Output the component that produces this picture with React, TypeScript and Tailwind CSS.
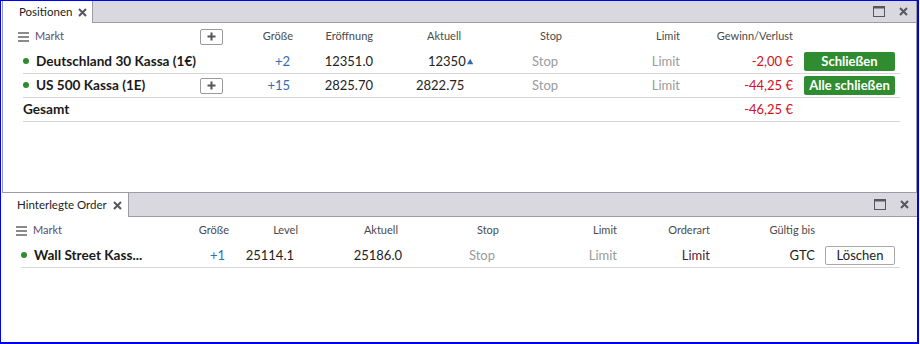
import React from "react";

function CloseIcon() {
    return (
        <svg width="9" height="9" viewBox="0 0 9 9" className="shrink-0">
            <path d="M1 1L8 8M8 1L1 8" stroke="#56565e" strokeWidth="2" />
        </svg>
    );
}

function MaxIcon() {
    return (
        <svg width="12" height="11" viewBox="0 0 12 11" className="shrink-0">
            <rect x="0.5" y="0.5" width="11" height="10" fill="none" stroke="#56565e" />
            <rect x="0.5" y="0.5" width="11" height="2" fill="#56565e" />
        </svg>
    );
}

function Burger() {
    return (
        <div className="flex flex-col gap-[2px] w-[11px] shrink-0">
            <div className="h-[2px] bg-[#8a8a8a]" />
            <div className="h-[2px] bg-[#8a8a8a]" />
            <div className="h-[2px] bg-[#8a8a8a]" />
        </div>
    );
}

function Dot() {
    return <div className="w-[6px] h-[6px] rounded-full bg-[#2e8b2e] shrink-0" />;
}

function PlusBtn() {
    return (
        <button className="w-[23px] h-[16px] border border-[#9a9a9a] rounded-[2px] bg-white flex items-center justify-center">
            <svg width="9" height="9" viewBox="0 0 9 9">
                <path d="M4.5 0.5V8.5M0.5 4.5H8.5" stroke="#555" strokeWidth="2" />
            </svg>
        </button>
    );
}

function TabBar({ label, tabW, padL, h }: { label: string; tabW: string; padL: string; h: string }) {
    return (
        <div className={`flex ${h} shrink-0`}>
            <div className={`${tabW} ${padL} bg-white border-r border-[#9c9ca6] flex items-center gap-[6px] text-[11.5px] text-[#222]`}>
                <span>{label}</span>
                <CloseIcon />
            </div>
            <div className="flex-1 bg-[#d9d8de] border-b border-[#9c9ca6] flex items-center justify-end gap-[14px] pr-[8px]">
                <MaxIcon />
                <CloseIcon />
            </div>
        </div>
    );
}

export default function App() {
    const head = "text-[11px] text-[#4a4a4a] shrink-0";
    const val = "text-[13px] shrink-0";
    const name = "text-[13.6px] font-bold text-[#1a1a1a] whitespace-nowrap";
    return (
        <div className="w-[919px] h-[344px] bg-white border-l border-t border-r-2 border-b-2 border-[#0000f0] flex flex-col font-['Lato','Liberation_Sans',sans-serif]">
            {/* Positionen */}
            <div className="h-[192px] ml-[1px] border-l border-b border-r border-[#9c9ca6] flex flex-col shrink-0">
                <TabBar label="Positionen" tabW="w-[90px]" padL="pl-[16px]" h="h-[22px]" />
                <div className="ml-[20px] w-[877px]">
                    <div className="h-[27px] flex items-center">
                        <div className="w-[182px] flex items-center gap-[6px] -ml-[5px] shrink-0">
                            <Burger />
                            <span className="text-[11px] text-[#5b4a6e]">Markt</span>
                        </div>
                        <div className="w-[27px] shrink-0 flex"><PlusBtn /></div>
                        <div className={`${head} w-[66px] text-right`}>Größe</div>
                        <div className={`${head} w-[80px] text-right`}>Eröffnung</div>
                        <div className={`${head} w-[100px] pl-[54px]`}>Aktuell</div>
                        <div className={`${head} w-[100px] pl-[67px]`}>Stop</div>
                        <div className={`${head} w-[107px] text-right`}>Limit</div>
                        <div className={`${head} w-[113px] text-right`}>Gewinn/Verlust</div>
                    </div>

                    <div className="h-[24px] flex items-center border-b border-[#d6d6d6]">
                        <div className="w-[177px] flex items-center gap-[7px] shrink-0">
                            <Dot />
                            <span className={name}>Deutschland 30 Kassa (1€)</span>
                        </div>
                        <div className="w-[27px] shrink-0" />
                        <div className={`${val} w-[66px] text-right pr-[3px] text-[#2f6db5]`}>+2</div>
                        <div className={`${val} w-[80px] text-right text-[#222]`}>12351.0</div>
                        <div className={`${val} w-[100px] pl-[55px] flex items-center text-[#222]`}>
                            <span>12350</span>
                            <svg width="8" height="7" viewBox="0 0 8 7" className="ml-[1px]">
                                <path d="M4 0L8 7H0Z" fill="#2f6db5" />
                            </svg>
                        </div>
                        <div className={`${val} w-[100px] pl-[59px] text-[#9a9a9a]`}>Stop</div>
                        <div className={`${val} w-[107px] text-right text-[#9a9a9a]`}>Limit</div>
                        <div className={`${val} w-[113px] text-right text-[#d0101b]`}>-2,00 €</div>
                        <div className="w-[11px] shrink-0" />
                        <button className="w-[91px] h-[19px] rounded-[2px] bg-[#2f8c30] text-white text-[13px] font-bold leading-none shrink-0">
                            Schließen
                        </button>
                    </div>

                    <div className="h-[24px] flex items-center border-b border-[#d6d6d6]">
                        <div className="w-[177px] flex items-center gap-[7px] shrink-0">
                            <Dot />
                            <span className={name}>US 500 Kassa (1E)</span>
                        </div>
                        <div className="w-[27px] shrink-0 flex"><PlusBtn /></div>
                        <div className={`${val} w-[66px] text-right pr-[3px] text-[#2f6db5]`}>+15</div>
                        <div className={`${val} w-[80px] text-right text-[#222]`}>2825.70</div>
                        <div className={`${val} w-[100px] pl-[43px] text-[#222]`}>2822.75</div>
                        <div className={`${val} w-[100px] pl-[59px] text-[#9a9a9a]`}>Stop</div>
                        <div className={`${val} w-[107px] text-right text-[#9a9a9a]`}>Limit</div>
                        <div className={`${val} w-[113px] text-right text-[#d0101b]`}>-44,25 €</div>
                        <div className="w-[11px] shrink-0" />
                        <button className="w-[91px] h-[19px] rounded-[2px] bg-[#2f8c30] text-white text-[13px] font-bold leading-none shrink-0">
                            Alle schließen
                        </button>
                    </div>

                    <div className="h-[24px] flex items-center border-b border-[#d6d6d6]">
                        <div className={`w-[550px] shrink-0 ${name}`}>Gesamt</div>
                        <div className="w-[107px] shrink-0" />
                        <div className={`${val} w-[113px] text-right text-[#d0101b]`}>-46,25 €</div>
                    </div>
                </div>
            </div>

            {/* Hinterlegte Order */}
            <div className="flex-1 ml-[1px] flex flex-col">
                <TabBar label="Hinterlegte Order" tabW="w-[127px]" padL="pl-[15px]" h="h-[24px]" />
                <div className="ml-[19px] w-[879px]">
                    <div className="h-[27px] flex items-center">
                        <div className="w-[165px] flex items-center gap-[6px] -ml-[5px] shrink-0">
                            <Burger />
                            <span className="text-[11px] text-[#5b4a6e]">Markt</span>
                        </div>
                        <div className={`${head} w-[48px] text-right`}>Größe</div>
                        <div className={`${head} w-[69px] text-right`}>Level</div>
                        <div className={`${head} w-[104px] text-right pr-[4px]`}>Aktuell</div>
                        <div className={`${head} w-[97px] text-right`}>Stop</div>
                        <div className={`${head} w-[118px] text-right`}>Limit</div>
                        <div className={`${head} w-[93px] text-right`}>Orderart</div>
                        <div className={`${head} w-[105px] text-right`}>Gültig bis</div>
                    </div>

                    <div className="h-[24px] flex items-center border-b border-[#d6d6d6]">
                        <div className="w-[160px] flex items-center gap-[7px] shrink-0">
                            <Dot />
                            <span className={name}>Wall Street Kass...</span>
                        </div>
                        <div className={`${val} w-[48px] text-right pr-[4px] text-[#2f6db5]`}>+1</div>
                        <div className={`${val} w-[69px] text-right pr-[4px] text-[#222]`}>25114.1</div>
                        <div className={`${val} w-[104px] text-right text-[#222]`}>25186.0</div>
                        <div className={`${val} w-[97px] text-right pr-[4px] text-[#9a9a9a]`}>Stop</div>
                        <div className={`${val} w-[118px] text-right text-[#9a9a9a]`}>Limit</div>
                        <div className={`${val} w-[93px] text-right text-[#4b1c40]`}>Limit</div>
                        <div className={`${val} w-[105px] text-right text-[#222]`}>GTC</div>
                        <div className="w-[10px] shrink-0" />
                        <button className="w-[70px] h-[19px] rounded-[2px] bg-white border border-[#a8a8a8] text-[#222] text-[13px] leading-none shrink-0">
                            Löschen
                        </button>
                    </div>
                </div>
            </div>
        </div>
    );
}
